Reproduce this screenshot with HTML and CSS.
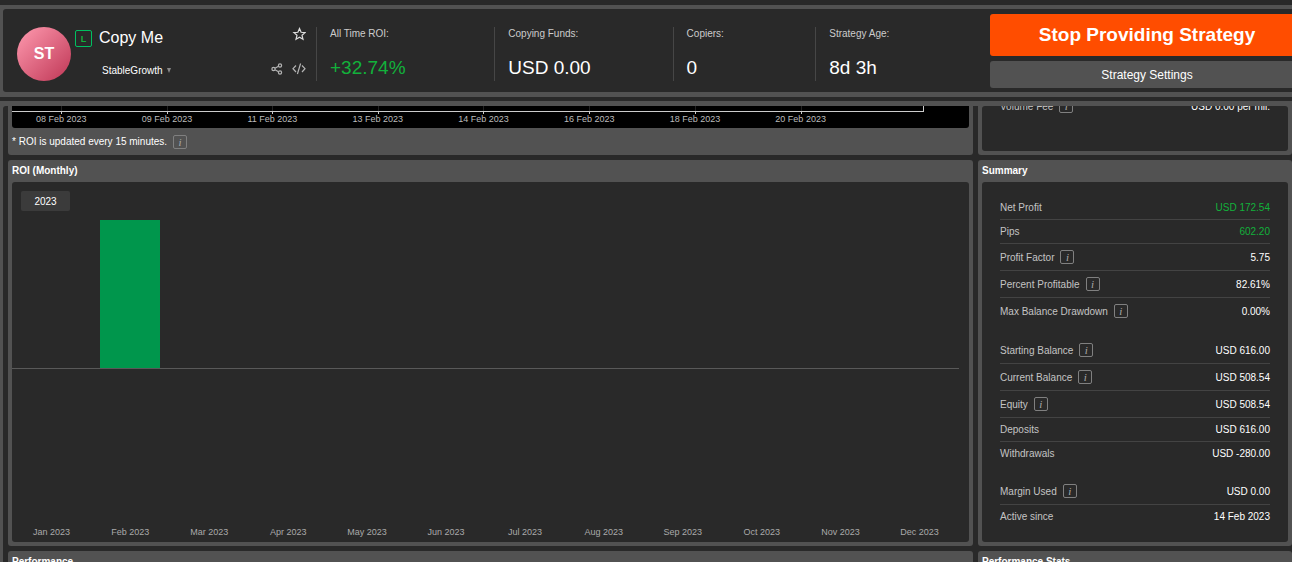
FILE: index.html
```html
<!doctype html>
<html lang="en">
<head>
    <meta charset="utf-8">
    <meta name="viewport" content="width=device-width, initial-scale=1.0">
    <title>Copy Me</title>
    <link rel="stylesheet" href="styles.css">
</head>
<body>
    <header class="header">
        <div class="header-inner">
            <div class="profile">
                <div class="avatar">ST</div>
                <div class="identity">
                    <div class="name"><span class="live-badge">L</span><h1>Copy Me</h1></div>
                    <button class="account">StableGrowth <span class="caret"></span></button>
                </div>
                <div class="tools">
                    <button class="icon-button" aria-label="Favourite">
                        <svg viewBox="0 0 14 14" width="14" height="14"><path d="M7.5 1.5l1.6 3.8 4 .3-3.1 2.7 1 4-3.5-2.100-3.500 2.100 1-4-3.100-2.700 4-.3z"/></svg>
                    </button>
                    <div class="tool-row">
                        <button class="icon-button" aria-label="Share">
                            <svg class="muted" viewBox="0 0 14 14" width="14" height="14"><circle cx="3.5" cy="7" r="1.6"/><circle cx="10" cy="3.5" r="1.6"/><circle cx="10" cy="10.5" r="1.6"/><path d="M5 6.2L8.500 4.300M5 7.800L8.500 9.700"/></svg>
                        </button>
                        <button class="icon-button" aria-label="Embed">
                            <svg class="muted" viewBox="0 0 14 14" width="14" height="14"><path d="M4 3.5L1 6.700 4 10M10 3.500L13 6.700 10 10M8.600 1.500L5.400 12"/></svg>
                        </button>
                    </div>
                </div>
            </div>
            <div class="stat"><span class="stat-label">All Time ROI:</span><span class="stat-value green">+32.74%</span></div>
            <div class="stat"><span class="stat-label">Copying Funds:</span><span class="stat-value">USD 0.00</span></div>
            <div class="stat"><span class="stat-label">Copiers:</span><span class="stat-value">0</span></div>
            <div class="stat"><span class="stat-label">Strategy Age:</span><span class="stat-value">8d 3h</span></div>
            <div class="actions">
                <button class="stop">Stop Providing Strategy</button>
                <button class="settings">Strategy Settings</button>
            </div>
        </div>
    </header>

    <main class="content">
        <div class="panels">
            <section class="panel">
                <div class="roi-chart">
                    <div class="roi-line"></div>
                    <ul class="roi-dates">
                        <li>08 Feb 2023</li>
                        <li>09 Feb 2023</li>
                        <li>11 Feb 2023</li>
                        <li>13 Feb 2023</li>
                        <li>14 Feb 2023</li>
                        <li>16 Feb 2023</li>
                        <li>18 Feb 2023</li>
                        <li>20 Feb 2023</li>
                    </ul>
                </div>
                <p class="note">* ROI is updated every 15 minutes. <button class="info">i</button></p>
            </section>

            <section class="panel">
                <div class="box fees">
                    <dl class="rows">
                        <div class="with-info"><dt>Volume Fee <button class="info">i</button></dt><dd>USD 0.00 per mil.</dd></div>
                    </dl>
                </div>
            </section>

            <section class="panel">
                <h2>ROI (Monthly)</h2>
                <div class="box">
                    <button class="year">2023</button>
                    <div class="months plus"><span class="bar"></span></div>
                    <div class="minus"></div>
                    <ul class="months month-names">
                        <li>Jan 2023</li>
                        <li>Feb 2023</li>
                        <li>Mar 2023</li>
                        <li>Apr 2023</li>
                        <li>May 2023</li>
                        <li>Jun 2023</li>
                        <li>Jul 2023</li>
                        <li>Aug 2023</li>
                        <li>Sep 2023</li>
                        <li>Oct 2023</li>
                        <li>Nov 2023</li>
                        <li>Dec 2023</li>
                    </ul>
                </div>
            </section>

            <section class="panel">
                <h2>Summary</h2>
                <div class="box summary">
                    <dl class="rows">
                        <div><dt>Net Profit</dt><dd class="green">USD 172.54</dd></div>
                        <div><dt>Pips</dt><dd class="green">602.20</dd></div>
                        <div class="with-info"><dt>Profit Factor <button class="info">i</button></dt><dd>5.75</dd></div>
                        <div class="with-info"><dt>Percent Profitable <button class="info">i</button></dt><dd>82.61%</dd></div>
                        <div class="with-info"><dt>Max Balance Drawdown <button class="info">i</button></dt><dd>0.00%</dd></div>
                    </dl>
                    <dl class="rows">
                        <div class="with-info"><dt>Starting Balance <button class="info">i</button></dt><dd>USD 616.00</dd></div>
                        <div class="with-info"><dt>Current Balance <button class="info">i</button></dt><dd>USD 508.54</dd></div>
                        <div class="with-info"><dt>Equity <button class="info">i</button></dt><dd>USD 508.54</dd></div>
                        <div><dt>Deposits</dt><dd>USD 616.00</dd></div>
                        <div><dt>Withdrawals</dt><dd>USD -280.00</dd></div>
                    </dl>
                    <dl class="rows">
                        <div class="with-info"><dt>Margin Used <button class="info">i</button></dt><dd>USD 0.00</dd></div>
                        <div><dt>Active since</dt><dd>14 Feb 2023</dd></div>
                    </dl>
                </div>
            </section>

            <section class="panel">
                <h2>Performance</h2>
                <div class="box"></div>
            </section>

            <section class="panel">
                <h2>Performance Stats</h2>
                <div class="box"></div>
            </section>
        </div>
    </main>
</body>
</html>
```

FILE: styles.css
```css
* {
    box-sizing: border-box;
}
body {
    display: flex;
    flex-direction: column;
    gap: 4px;
    height: 100vh;
    margin: 0;
    padding-top: 5px;
    overflow: hidden;
    background-color: #292929;
    color: #fff;
    font-family: "Liberation Sans", Arial, sans-serif;
    font-size: 10px;
}
h1, h2, p, ul, dl, dd {
    margin: 0;
    padding: 0;
}
ul {
    list-style: none;
}
button {
    border: none;
    padding: 0;
    background: none;
    color: inherit;
    font-family: inherit;
    font-size: inherit;
    cursor: pointer;
}
.green {
    color: #12b13b;
}

/* header */
.header {
    flex: none;
    padding: 4px 0 5px 3px;
    background-color: #525252;
}
.header-inner {
    display: grid;
    grid-template-columns: 313px 1fr 1fr 0.8fr 0.98fr 302px;
    align-items: start;
    padding: 5px 0 4px;
    background-color: #292929;
    border-radius: 3px 0 0 3px;
}
.profile, .stat {
    height: 54px;
    margin-top: 13px;
}
.profile {
    display: flex;
    padding: 0 10px 0 14px;
}
.avatar {
    width: 54px;
    border-radius: 50%;
    background: linear-gradient(135deg, #ff9bb0, #bf3655);
    font-size: 16px;
    font-weight: bold;
    line-height: 54px;
    text-align: center;
}
.identity {
    display: flex;
    flex: 1;
    flex-direction: column;
    justify-content: space-between;
    align-items: flex-start;
    padding-left: 4px;
}
.name {
    display: flex;
    align-items: center;
    gap: 7px;
    line-height: 22px;
}
.name h1 {
    font-size: 16px;
    font-weight: normal;
}
.live-badge {
    width: 17px;
    height: 17px;
    border: 1px solid #00c060;
    border-radius: 2px;
    color: #12b13b;
    font-size: 9px;
    font-weight: bold;
    line-height: 16px;
    text-align: center;
}
.account {
    display: flex;
    align-items: center;
    gap: 4px;
    height: 22px;
    padding-left: 27px;
}
.caret {
    border: 2px solid transparent;
    border-top: 5px solid #888;
    border-bottom: none;
}
.tools {
    display: flex;
    flex-direction: column;
    justify-content: space-between;
    align-items: flex-end;
    padding-bottom: 5px;
}
.tool-row {
    display: flex;
    gap: 8px;
}
.icon-button {
    height: 14px;
}
.icon-button svg {
    display: block;
    fill: none;
    stroke: #ddd;
    stroke-width: 1.2;
}
.icon-button .muted {
    stroke: #b4b4b4;
}
.stat {
    display: flex;
    flex-direction: column;
    justify-content: space-between;
    padding-left: 13px;
    border-left: 1px solid #464646;
}
.stat-label {
    color: #ccc;
    line-height: 14px;
}
.stat-value {
    font-size: 19px;
    line-height: 26px;
}
.actions {
    display: flex;
    flex-direction: column;
    gap: 5px;
    margin-right: -12px;
}
.stop {
    height: 42px;
    background-color: #ff4d00;
    border-radius: 3px;
    font-size: 19px;
    font-weight: bold;
}
.settings {
    height: 27px;
    background-color: #525252;
    border-radius: 3px;
    font-size: 12px;
}

/* scrolling area */
.content {
    flex: 1;
    min-height: 0;
    padding: 5px 0 0 3px;
    background-color: #525252;
}
.panels {
    display: grid;
    grid-template-columns: minmax(0, 1fr) 314px;
    grid-auto-rows: max-content;
    gap: 5px;
    height: 100%;
    padding-left: 5px;
    overflow: hidden;
    background-color: #292929;
    border-top-left-radius: 3px;
}
.panel {
    display: flex;
    flex-direction: column;
    padding: 0 4px 4px;
    background-color: #525252;
    border-radius: 3px;
}
.panel h2 {
    font-size: 10px;
    line-height: 22px;
}
.box {
    flex: 1;
    background-color: #292929;
    border-radius: 3px;
}
.panel:nth-child(-n+2) {
    border-radius: 0 0 3px 3px;
}

/* bottom of the roi chart */
.roi-chart {
    height: 22px;
    background-color: #000;
    border-radius: 0 0 3px 3px;
}
.roi-line {
    height: 6px;
    margin-right: 45px;
    border: solid #ccc;
    border-width: 0 1px 1px 0;
}
.roi-dates {
    display: flex;
    justify-content: space-between;
    padding: 0 143px 0 24px;
    color: #bbb;
    font-size: 9px;
    line-height: 14px;
}
.roi-dates li {
    position: relative;
}
.roi-dates li::before {
    content: "";
    position: absolute;
    left: 50%;
    top: -6px;
    height: 8px;
    border-left: 1px solid #999;
    border-image: linear-gradient(#222 5px, #ccc 5px) 1;
}
.note {
    display: flex;
    align-items: center;
    height: 23px;
    padding-top: 4px;
}
.info {
    width: 14px;
    height: 14px;
    margin-left: 6px;
    border: 1px solid #808080;
    border-radius: 2px;
    color: #aaa;
    font-family: "Liberation Serif", serif;
    font-size: 11px;
    font-style: italic;
    line-height: 12px;
}

/* monthly roi */
.year {
    display: block;
    width: 49px;
    height: 20px;
    margin: 9px 9px 0;
    background-color: #3b3b3b;
    border-radius: 2px;
}
.months {
    display: grid;
    grid-template-columns: repeat(12, 1fr);
    margin-right: 10px;
}
.plus {
    height: 158px;
    padding-top: 9px;
    border-bottom: 1px solid #595959;
}
.bar {
    grid-column: 2;
    width: 76%;
    margin: 0 auto;
    background-color: #00964c;
}
.minus {
    height: 157px;
}
.month-names {
    padding-bottom: 4px;
    color: #aaa;
    font-size: 9px;
    line-height: 12px;
    text-align: center;
}

/* value rows */
.summary {
    display: flex;
    flex-direction: column;
    gap: 13px;
    padding: 14px 18px 13px;
}
.fees {
    min-height: 45px;
    padding: 0 18px;
}
.fees .rows {
    margin-top: -13px;
}
.rows div {
    display: flex;
    justify-content: space-between;
    align-items: center;
    height: 24px;
    border-bottom: 1px solid #434343;
}
.rows .with-info {
    height: 27px;
}
.rows div:last-child {
    height: 23px;
    border-bottom: none;
}
.rows .with-info:last-child {
    height: 26px;
}
.rows dt {
    display: flex;
    align-items: center;
    color: #c4c4c4;
}
```
